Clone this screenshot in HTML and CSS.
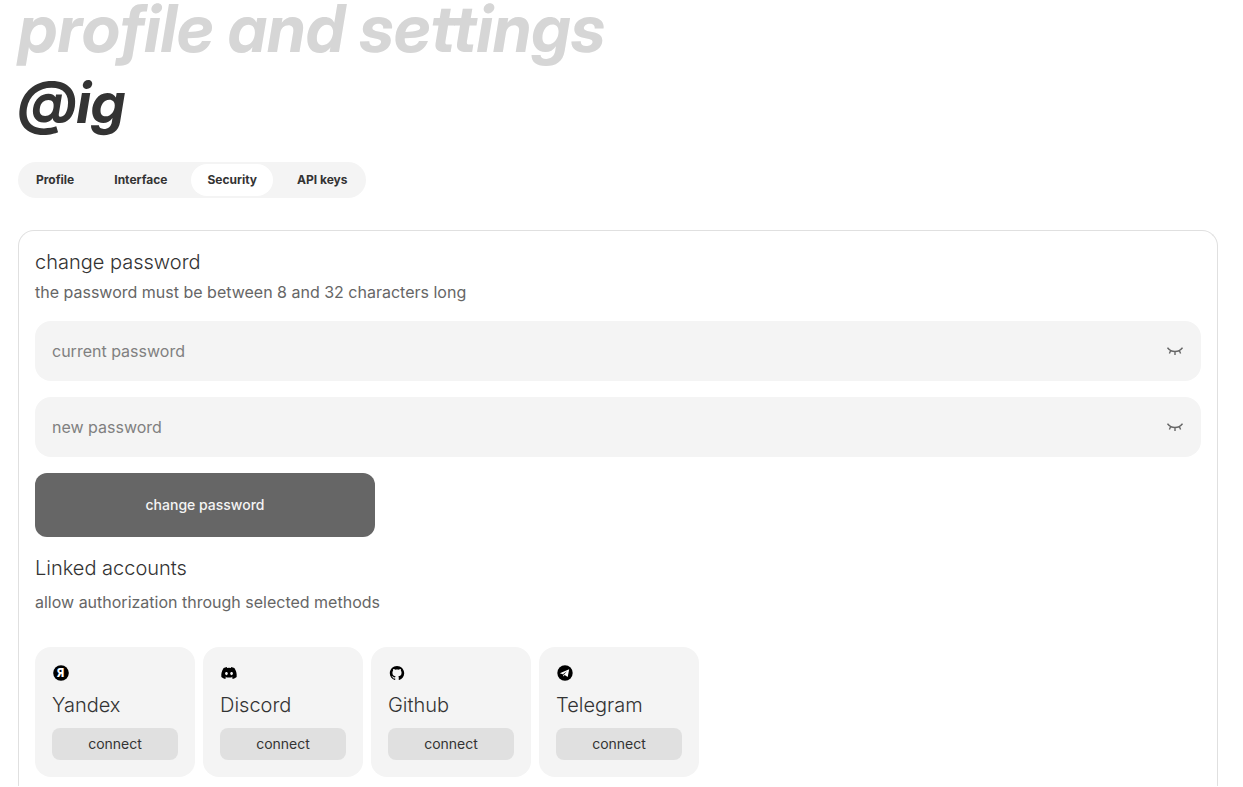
FILE: index.html
```html
<!DOCTYPE html>
<html lang="en">
<head>
    <meta charset="UTF-8">
    <meta name="viewport" content="width=device-width, initial-scale=1.0">
    <title>profile and settings</title>
    <link rel="stylesheet" href="styles.css">
</head>
<body>

<main class="page">
    <h1 class="page-title">profile and settings</h1>
    <h2 class="user-name">@ig</h2>

    <nav class="tabs">
        <button class="tab" type="button">Profile</button>
        <button class="tab" type="button">Interface</button>
        <button class="tab active" type="button">Security</button>
        <button class="tab" type="button">API keys</button>
    </nav>

    <section class="panel">
        <form class="password-form">
            <div class="form-head">
                <h3 class="title">change password</h3>
                <p class="subtitle">the password must be between 8 and 32 characters long</p>
            </div>
            <div class="field">
                <input class="field-input" type="password" placeholder="current password" aria-label="current password">
                <button class="eye" type="button" aria-label="show current password">
                    <svg viewBox="0 0 16 16"><path d="M.5 4.700C2.500 7.300 4.500 8.500 8 8.500s5.500-1.200 7.500-3.800M3.600 7.800L2.400 10.500M8 8.800v3.200M12.400 7.800l1.200 2.700"/></svg>
                </button>
            </div>
            <div class="field">
                <input class="field-input" type="password" placeholder="new password" aria-label="new password">
                <button class="eye" type="button" aria-label="show new password">
                    <svg viewBox="0 0 16 16"><path d="M.5 4.700C2.500 7.300 4.500 8.500 8 8.500s5.500-1.200 7.500-3.800M3.600 7.800L2.400 10.500M8 8.800v3.200M12.400 7.800l1.200 2.700"/></svg>
                </button>
            </div>
            <button class="submit" type="button">change password</button>
        </form>

        <div class="linked">
            <h3 class="title">Linked accounts</h3>
            <p class="subtitle">allow authorization through selected methods</p>
        </div>

        <div class="accounts">
            <div class="account">
                <svg class="account-icon" viewBox="0 0 18 18">
                    <circle cx="9" cy="9" r="7.800"/>
                    <text class="yandex-letter" x="8.500" y="13">Я</text>
                </svg>
                <h4 class="title">Yandex</h4>
                <button class="connect" type="button">connect</button>
            </div>
            <div class="account">
                <svg class="account-icon" viewBox="-2 -2 28 28">
                    <path d="M20.317 4.370a19.791 19.791 0 0 0-4.885-1.515.074.074 0 0 0-.079.037c-.21.375-.444.864-.608 1.250a18.270 18.270 0 0 0-5.487 0 12.640 12.640 0 0 0-.617-1.250.077.077 0 0 0-.079-.037A19.736 19.736 0 0 0 3.677 4.370a.07.07 0 0 0-.032.027C.533 9.046-.320 13.580.099 18.057a.082.082 0 0 0 .031.057 19.900 19.900 0 0 0 5.993 3.030.078.078 0 0 0 .084-.028 14.090 14.090 0 0 0 1.226-1.994.076.076 0 0 0-.041-.106 13.107 13.107 0 0 1-1.872-.892.077.077 0 0 1-.008-.128 10.200 10.200 0 0 0 .372-.292.074.074 0 0 1 .077-.010c3.928 1.793 8.180 1.793 12.062 0a.074.074 0 0 1 .078.010c.12.098.246.198.373.292a.077.077 0 0 1-.006.127 12.299 12.299 0 0 1-1.873.892.077.077 0 0 0-.041.107c.36.698.772 1.362 1.225 1.993a.076.076 0 0 0 .084.028 19.839 19.839 0 0 0 6.002-3.030.077.077 0 0 0 .032-.054c.5-5.177-.838-9.674-3.549-13.660a.061.061 0 0 0-.031-.030zM8.020 15.330c-1.183 0-2.157-1.085-2.157-2.419 0-1.333.956-2.419 2.157-2.419 1.210 0 2.176 1.096 2.157 2.420 0 1.333-.956 2.418-2.157 2.418zm7.975 0c-1.183 0-2.157-1.085-2.157-2.419 0-1.333.955-2.419 2.157-2.419 1.210 0 2.176 1.096 2.157 2.420 0 1.333-.946 2.418-2.157 2.418z"/>
                </svg>
                <h4 class="title">Discord</h4>
                <button class="connect" type="button">connect</button>
            </div>
            <div class="account">
                <svg class="account-icon" viewBox="-3 -3 30 30">
                    <path d="M12 .297c-6.630 0-12 5.373-12 12 0 5.303 3.438 9.800 8.205 11.385.6.113.82-.258.82-.577 0-.285-.010-1.040-.015-2.040-3.338.724-4.042-1.610-4.042-1.610C4.422 18.070 3.633 17.700 3.633 17.700c-1.087-.744.084-.729.084-.729 1.205.084 1.838 1.236 1.838 1.236 1.070 1.835 2.809 1.305 3.495.998.108-.776.417-1.305.76-1.605-2.665-.300-5.466-1.332-5.466-5.930 0-1.310.465-2.380 1.235-3.220-.135-.303-.540-1.523.105-3.176 0 0 1.005-.322 3.300 1.230.96-.267 1.980-.399 3-.405 1.020.006 2.040.138 3 .405 2.280-1.552 3.285-1.230 3.285-1.230.645 1.653.24 2.873.12 3.176.765.840 1.230 1.910 1.230 3.220 0 4.610-2.805 5.625-5.475 5.920.42.360.81 1.096.81 2.220 0 1.606-.015 2.896-.015 3.286 0 .315.21.690.825.570C20.565 22.092 24 17.592 24 12.297c0-6.627-5.373-12-12-12"/>
                </svg>
                <h4 class="title">Github</h4>
                <button class="connect" type="button">connect</button>
            </div>
            <div class="account">
                <svg class="account-icon" viewBox="-2 -2 28 28">
                    <circle cx="12" cy="12" r="12"/>
                    <path class="plane" d="M4 12.200L18.500 6 16.200 18.200 11.500 15 9.400 17.300 8.600 13.800z"/>
                    <path d="M9.200 13.700l6-4.400-4.600 5.200-.900 1.700z"/>
                </svg>
                <h4 class="title">Telegram</h4>
                <button class="connect" type="button">connect</button>
            </div>
        </div>
    </section>
</main>

</body>
</html>
```
FILE: styles.css
```css
* {
    box-sizing: border-box;
}
body {
    margin: 0;
    background: #fff;
    color: #333;
    font-family: 'Inter', sans-serif;
}
h1, h2, h3, h4, p {
    margin: 0;
}
button, input {
    border: none;
    font-family: inherit;
    color: inherit;
}
button {
    cursor: pointer;
}
.page {
    padding: 0 25px 0 18px;
}
.page-title,
.user-name {
    font-family: 'Inter Display', 'Inter', sans-serif;
    font-style: italic;
    font-weight: 700;
}
.page-title {
    color: #d6d6d6;
    font-size: 66px;
    line-height: 56px;
}
.user-name {
    margin: 12px 0 26px;
    font-size: 58px;
    line-height: 68px;
}
.tabs {
    display: inline-flex;
    gap: 8px;
    padding: 2px;
    border-radius: 18px;
    background: #f4f4f4;
    vertical-align: top;
}
.tab {
    height: 32px;
    padding: 0 16px 2px;
    border-radius: 16px;
    background: transparent;
    font-size: 12px;
    font-weight: 700;
}
.tab.active {
    background: #fff;
}
.panel {
    margin-top: 32px;
    padding: 16px 16px 9px;
    border: 1px solid #e0e0e0;
    border-bottom: none;
    border-radius: 16px 16px 0 0;
}
.title {
    font-size: 20px;
    font-weight: 300;
    line-height: 30px;
}
.subtitle {
    color: #666;
    font-size: 16px;
    line-height: 30px;
}
.form-head {
    margin-bottom: 14px;
}
.field {
    display: flex;
    align-items: center;
    height: 60px;
    margin-bottom: 16px;
    padding: 0 17px;
    border-radius: 16px;
    background: #f4f4f4;
}
.field-input {
    flex: 1;
    min-width: 0;
    height: 100%;
    padding: 0;
    background: transparent;
    font-size: 16px;
    outline: none;
}
.field-input::placeholder {
    color: #808080;
}
.eye {
    width: 18px;
    height: 18px;
    padding: 1px;
    background: transparent;
}
.eye svg {
    display: block;
    fill: none;
    stroke: #666;
    stroke-width: 1.4;
}
.submit {
    display: block;
    width: 340px;
    max-width: 100%;
    height: 64px;
    padding: 0 0 2px;
    border-radius: 12px;
    background: #666;
    color: #f4f4f4;
    font-size: 14px;
    font-weight: 500;
}
.linked {
    display: grid;
    gap: 4px;
    margin: 16px 0 30px;
}
.accounts {
    display: flex;
    flex-wrap: wrap;
    gap: 8px;
}
.account {
    display: flex;
    flex-direction: column;
    gap: 8px;
    width: 160px;
    padding: 17px;
    border-radius: 16px;
    background: #f4f4f4;
}
.account-icon {
    width: 18px;
    height: 18px;
    fill: #000;
}
.yandex-letter {
    fill: #fff;
    font-family: 'DejaVu Sans Condensed', 'DejaVu Sans', sans-serif;
    font-size: 12px;
    font-weight: 700;
    text-anchor: middle;
}
.plane {
    fill: #fff;
}
.connect {
    height: 32px;
    padding: 0 0 2px;
    border-radius: 8px;
    background: #e0e0e0;
    font-size: 14px;
}
```
